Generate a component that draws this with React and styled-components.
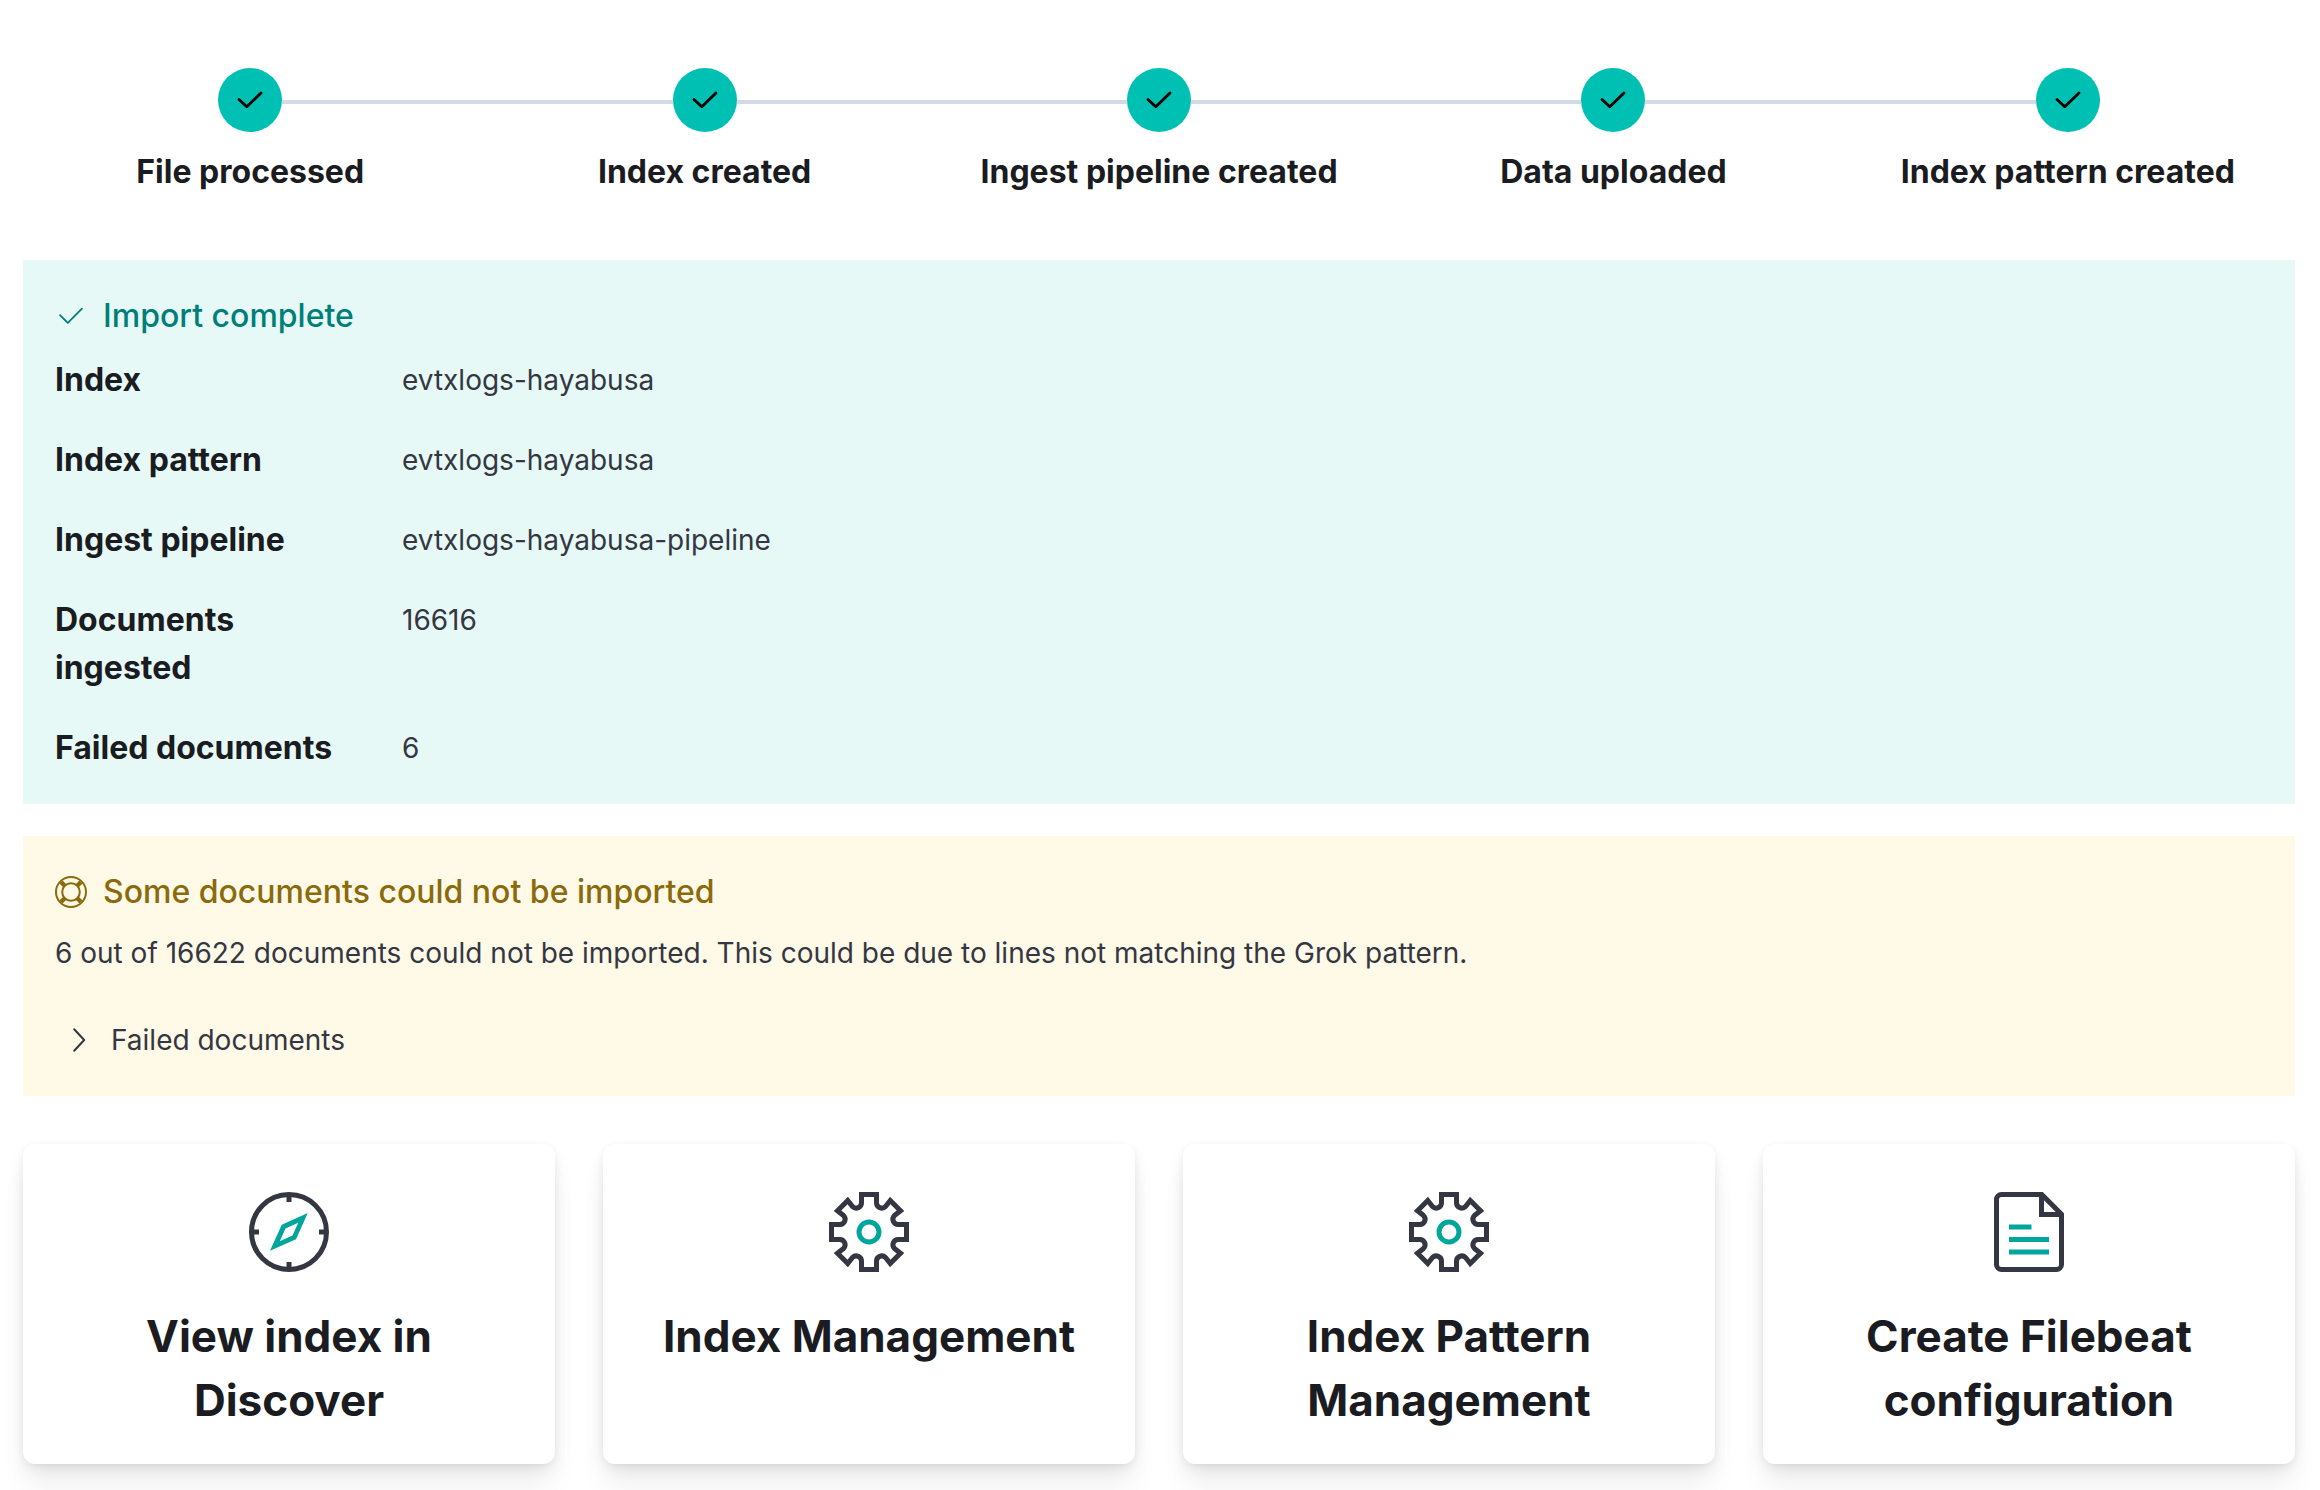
import React, { useState } from "react";
import styled, { createGlobalStyle } from "styled-components";

const GlobalStyle = createGlobalStyle`
  *, *::before, *::after { box-sizing: border-box; }
  body {
    margin: 0;
    background: #fff;
    color: #343741;
    font-family: Inter, "Liberation Sans", sans-serif;
    font-size: 28px;
    line-height: 48px;
  }
  h2, h3, p, ol, dl, dt, dd { margin: 0; padding: 0; }
`;

const Page = styled.main`
  display: flex;
  flex-direction: column;
  padding: 36px 25px 26px 23px;
`;

const Steps = styled.ol`
  display: flex;
  list-style: none;
  margin-bottom: 32px;
`;

const Step = styled.li`
  flex: 1 1 0;
  display: grid;
  grid-template-columns: 1fr 64px 1fr;
  align-items: center;
  padding: 32px 0;
  row-gap: 16px;
`;

const Connector = styled.span`
  height: 4px;
  margin-top: 4px;
  background: ${(p) => (p.$visible ? "#d3dae6" : "transparent")};
`;

const StepCircle = styled.span`
  display: flex;
  align-items: center;
  justify-content: center;
  width: 64px;
  height: 64px;
  border-radius: 50%;
  background: #00bfb3;
  color: #000;
`;

const StepTitle = styled.span`
  grid-column: 1 / -1;
  text-align: center;
  font-size: 32px;
  font-weight: 700;
  color: #1a1c21;
`;

const Callout = styled.section`
  padding: 32px;
  margin-bottom: ${(p) => p.$gap}px;
  background: ${(p) => p.$background};
`;

const CalloutTitle = styled.h2`
  display: flex;
  align-items: center;
  gap: 16px;
  margin-bottom: 16px;
  font-size: 32px;
  font-weight: 500;
  color: ${(p) => p.$color};
`;

const CalloutText = styled.p`
  line-height: 42px;
`;

const Summary = styled.dl`
  display: grid;
  grid-template-columns: 315px 1fr;
  column-gap: 32px;
  row-gap: 32px;
`;

const Term = styled.dt`
  max-width: 300px;
  font-size: 32px;
  font-weight: 700;
  color: #1a1c21;
`;

const Description = styled.dd`
  overflow-wrap: anywhere;
`;

const AccordionButton = styled.button`
  display: flex;
  align-items: center;
  gap: 16px;
  margin-top: 42px;
  padding: 0 8px;
  border: 0;
  background: none;
  font: inherit;
  color: inherit;
  cursor: pointer;
`;

const Cards = styled.nav`
  display: grid;
  grid-template-columns: repeat(4, 1fr);
  gap: 48px;
`;

const Card = styled.a`
  display: flex;
  flex-direction: column;
  align-items: center;
  gap: 32px;
  padding: 48px 32px 32px;
  border-radius: 12px;
  background: #fff;
  color: #1a1c21;
  text-align: center;
  text-decoration: none;
  box-shadow:
    0 2px 8px -2px rgba(0, 0, 0, 0.08),
    0 5px 16px -2px rgba(0, 0, 0, 0.06),
    0 11px 24px -2px rgba(0, 0, 0, 0.05),
    0 30px 30px -2px rgba(0, 0, 0, 0.04);
`;

const CardTitle = styled.h3`
  max-width: 420px;
  font-size: 44px;
  line-height: 64px;
  font-weight: 700;
`;

const CheckBold = () => (
  <svg width="32" height="32" viewBox="0 0 16 16" fill="none" stroke="currentColor" strokeWidth="1.4" strokeLinecap="round" strokeLinejoin="round" aria-hidden="true">
    <path d="M2.5 7.7 6.4 11.4 13.5 4.5" />
  </svg>
);

const CheckThin = () => (
  <svg width="32" height="32" viewBox="0 0 16 16" fill="none" stroke="currentColor" strokeWidth="0.9" strokeLinecap="round" strokeLinejoin="round" aria-hidden="true">
    <path d="M2.5 7.6 6.4 11.4 13.5 4.3" />
  </svg>
);

const Lifebuoy = () => (
  <svg width="32" height="32" viewBox="0 0 16 16" fill="none" stroke="currentColor" aria-hidden="true">
    <circle cx="8" cy="8" r="7.5" />
    <circle cx="8" cy="8" r="4.4" />
    <path strokeWidth="2.2" d="M3 3 4.9 4.9M13 3 11.1 4.9M3 13 4.9 11.1M13 13 11.1 11.1" />
  </svg>
);

const Chevron = ({ open }) => (
  <svg width="32" height="32" viewBox="0 0 16 16" fill="none" stroke="currentColor" strokeLinecap="round" strokeLinejoin="round" aria-hidden="true">
    <path d={open ? "M2.5 5.5 8 10.5 13.5 5.5" : "M5.6 2.6 10.6 8 5.6 13.4"} />
  </svg>
);

const Compass = () => (
  <svg width="80" height="80" viewBox="0 0 32 32" fill="none" strokeWidth="2" aria-hidden="true">
    <circle cx="16" cy="16" r="15" stroke="#343741" />
    <path d="M16 1v3M16 28v3M1 16h3M28 16h3" stroke="#343741" />
    <path fill="#00a69b" fillRule="evenodd" d="M8.4 23.5 13.1 13.1 23.5 8.4 18.8 18.9ZM12.3 19.7 17.4 17.4 19.7 12.3 14.6 14.6Z" />
  </svg>
);

const Gear = () => (
  <svg width="80" height="80" viewBox="0 0 32 32" fill="none" strokeWidth="2" aria-hidden="true">
    <path stroke="#343741" d="M13 1h6v3.3a2.1 2.1 0 0 0 3.6 1.5L24.5 3.4 28.6 7.5 26.2 9.4A2.1 2.1 0 0 0 27.7 13H31v6h-3.3a2.1 2.1 0 0 0-1.5 3.6L28.6 24.5 24.5 28.6 22.6 26.2A2.1 2.1 0 0 0 19 27.7V31h-6v-3.3a2.1 2.1 0 0 0-3.6-1.5L7.5 28.6 3.4 24.5 5.8 22.6A2.1 2.1 0 0 0 4.3 19H1v-6h3.3A2.1 2.1 0 0 0 5.8 9.4L3.4 7.5 7.5 3.4 9.4 5.8A2.1 2.1 0 0 0 13 4.3Z" />
    <circle cx="16" cy="16" r="4" stroke="#00a69b" />
  </svg>
);

const DocumentIcon = () => (
  <svg width="80" height="80" viewBox="0 0 32 32" fill="none" strokeWidth="2" aria-hidden="true">
    <path stroke="#343741" d="M21.1 1H5a2 2 0 0 0-2 2v26a2 2 0 0 0 2 2h22a2 2 0 0 0 2-2V8.9Z" />
    <path stroke="#343741" d="M21 1v8h8" />
    <path stroke="#00a69b" d="M8 14h9M8 19h16M8 24h16" />
  </svg>
);

const STEPS = [
  "File processed",
  "Index created",
  "Ingest pipeline created",
  "Data uploaded",
  "Index pattern created",
];

const SUMMARY = [
  ["Index", "evtxlogs-hayabusa"],
  ["Index pattern", "evtxlogs-hayabusa"],
  ["Ingest pipeline", "evtxlogs-hayabusa-pipeline"],
  ["Documents ingested", "16616"],
  ["Failed documents", "6"],
];

const CARDS = [
  ["View index in Discover", Compass],
  ["Index Management", Gear],
  ["Index Pattern Management", Gear],
  ["Create Filebeat configuration", DocumentIcon],
];

export default function App() {
  const [open, setOpen] = useState(false);
  return (
    <>
      <GlobalStyle />
      <Page>
        <Steps>
          {STEPS.map((title, i) => (
            <Step key={title}>
              <Connector $visible={i > 0} />
              <StepCircle>
                <CheckBold />
              </StepCircle>
              <Connector $visible={i < STEPS.length - 1} />
              <StepTitle>{title}</StepTitle>
            </Step>
          ))}
        </Steps>

        <Callout $background="#e6f9f7" $gap={32}>
          <CalloutTitle $color="#007e77">
            <CheckThin />
            Import complete
          </CalloutTitle>
          <Summary>
            {SUMMARY.map(([term, value]) => (
              <React.Fragment key={term}>
                <Term>{term}</Term>
                <Description>{value}</Description>
              </React.Fragment>
            ))}
          </Summary>
        </Callout>

        <Callout $background="#fff9e8" $gap={48}>
          <CalloutTitle $color="#8a6a0a">
            <Lifebuoy />
            Some documents could not be imported
          </CalloutTitle>
          <CalloutText>
            6 out of 16622 documents could not be imported. This could be due to
            lines not matching the Grok pattern.
          </CalloutText>
          <AccordionButton type="button" aria-expanded={open} onClick={() => setOpen(!open)}>
            <Chevron open={open} />
            Failed documents
          </AccordionButton>
        </Callout>

        <Cards>
          {CARDS.map(([title, Icon]) => (
            <Card key={title} href="#">
              <Icon />
              <CardTitle>{title}</CardTitle>
            </Card>
          ))}
        </Cards>
      </Page>
    </>
  );
}
